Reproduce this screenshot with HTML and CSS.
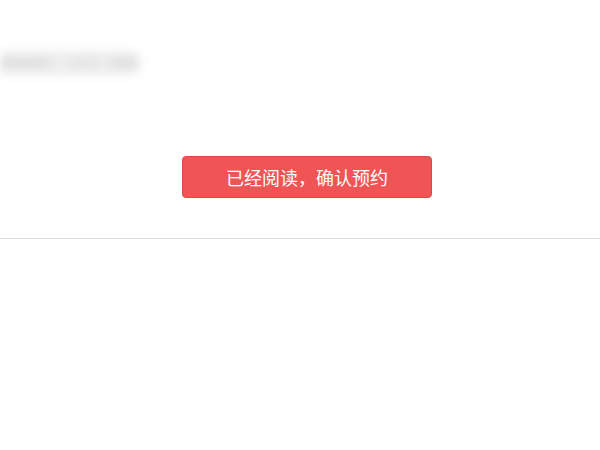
FILE: index.html
```html
<!DOCTYPE html>
<html lang="zh">
<head>
<meta charset="utf-8">
<link rel="stylesheet" href="styles.css">
</head>
<body>
<div class="page">
  <div class="blurred">
    <span class="blob b1"></span>
    <span class="blob b2"></span>
    <span class="blob b3"></span>
  </div>
  <div class="actions">
    <button class="confirm">已经阅读，确认预约</button>
  </div>
  <hr class="divider">
</div>
</body>
</html>
```
FILE: styles.css
```css
html, body {
  margin: 0;
  padding: 0;
  background: #fff;
  font-family: "Noto Sans CJK SC", "Microsoft YaHei", sans-serif;
}
.page {
  width: 600px;
  height: 450px;
  overflow: hidden;
}
.blurred {
  margin-top: 51px;
  height: 24px;
  width: 142px;
  display: flex;
  align-items: center;
  filter: blur(4px);
  background: #eeeeee;
  border-radius: 0 12px 12px 0;
}
.blob {
  display: block;
  height: 10px;
  border-radius: 5px;
  background: #e0e0e0;
}
.b1 { width: 50px; margin-left: 0; }
.b2 { width: 30px; margin-left: 20px; background: #e6e6e6; }
.b3 { width: 26px; margin-left: 10px; }
.actions {
  display: flex;
  justify-content: center;
  margin-top: 81px;
  padding-left: 14px;
}
.confirm {
  width: 250px;
  height: 42px;
  background: #f15454;
  border: 1px solid #d94a4a;
  border-radius: 4px;
  color: #fff;
  font-family: "Noto Sans CJK SC", sans-serif;
  font-size: 18px;
  padding: 0;
  line-height: 40px;
}
.divider {
  margin: 40px 0 0;
  border: 0;
  border-top: 1px solid #dcdcdc;
  height: 0;
}
```
